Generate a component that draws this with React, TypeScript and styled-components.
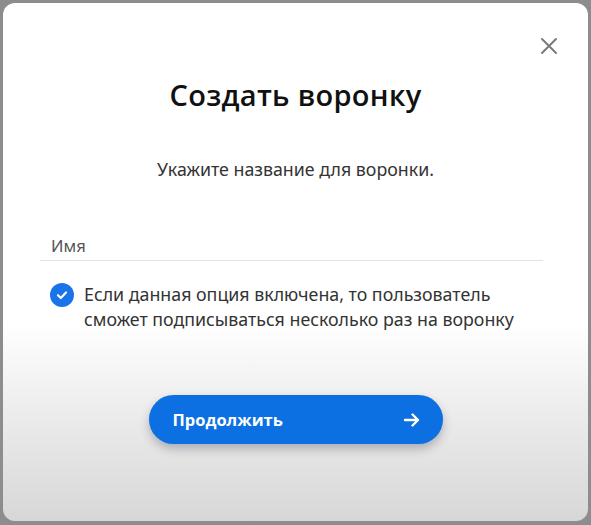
import React, { FC } from 'react';
import styled, { createGlobalStyle } from 'styled-components';

const GlobalStyle = createGlobalStyle`
    html, body {
        margin: 0;
        padding: 0;
        background: #8d8d8d;
    }
    body {
        font-family: 'Noto Sans', 'Open Sans', sans-serif;
    }
`;

const Backdrop = styled.div`
    width: 591px;
    height: 525px;
    padding: 3px 3px 4px 3px;
    box-sizing: border-box;
    background: #8d8d8d;
`;

const Modal = styled.div`
    position: relative;
    height: 100%;
    border-radius: 12px;
    background: linear-gradient(180deg, #ffffff 0%, #ffffff 62%, #ebebeb 80%, #d7d7d7 100%);
    display: flex;
    flex-direction: column;
    align-items: center;
    padding: 72px 37px 0 37px;
    box-sizing: border-box;
`;

const CloseButton = styled.button`
    position: absolute;
    top: 32px;
    right: 28px;
    width: 22px;
    height: 22px;
    padding: 0;
    border: none;
    background: none;
    display: flex;
    align-items: center;
    justify-content: center;
    color: #7a7a7a;
`;

const Title = styled.h1`
    margin: 0;
    font-family: 'Open Sans', 'Noto Sans', sans-serif;
    font-weight: 600;
    font-size: 29px;
    line-height: 40px;
    color: #111;
    letter-spacing: 0.3px;
`;

const Subtitle = styled.p`
    margin: 42px 0 0;
    font-size: 17.8px;
    line-height: 24px;
    color: #333;
`;

const Field = styled.div`
    align-self: stretch;
    margin: 54px 8px 0 0;
    padding: 0 0 3px 11px;
    border-bottom: 1.5px solid #e2e2e2;
    font-size: 16.5px;
    line-height: 22px;
    color: #555;
`;

const OptionRow = styled.label`
    align-self: stretch;
    margin-top: 21px;
    display: flex;
    align-items: flex-start;
    gap: 10px;
    padding-left: 10px;
`;

const Check = styled.span`
    flex: none;
    width: 24px;
    height: 24px;
    margin-top: 1px;
    border-radius: 50%;
    background: #1a73e8;
    display: flex;
    align-items: center;
    justify-content: center;
`;

const OptionText = styled.span`
    font-size: 17.8px;
    line-height: 25px;
    color: #333;
`;

const ContinueButton = styled.button`
    margin-top: 63px;
    width: 294px;
    height: 49px;
    border: none;
    border-radius: 25px;
    background: #0c70e3;
    box-shadow: 0 5px 10px rgba(40, 50, 70, 0.3);
    display: flex;
    align-items: center;
    justify-content: space-between;
    padding: 0 22px 0 24px;
    box-sizing: border-box;
    color: #fff;
    font-family: 'Open Sans', 'Noto Sans', sans-serif;
    font-weight: 700;
    font-size: 16.5px;
`;

const App: FC = () => (
    <>
        <GlobalStyle />
        <Backdrop>
            <Modal>
                <CloseButton aria-label="Закрыть">
                    <svg width="18" height="18" viewBox="0 0 18 18">
                        <path d="M2 2L16 16M16 2L2 16" stroke="currentColor" strokeWidth="2" strokeLinecap="round" />
                    </svg>
                </CloseButton>
                <Title>Создать воронку</Title>
                <Subtitle>Укажите название для воронки.</Subtitle>
                <Field>Имя</Field>
                <OptionRow>
                    <Check>
                        <svg width="14" height="14" viewBox="0 0 14 14">
                            <path d="M3 7.2L5.8 10L11 4.5" fill="none" stroke="#fff" strokeWidth="2.2" strokeLinecap="round" strokeLinejoin="round" />
                        </svg>
                    </Check>
                    <OptionText>
                        Если данная опция включена, то пользователь
                        <br />
                        сможет подписываться несколько раз на воронку
                    </OptionText>
                </OptionRow>
                <ContinueButton>
                    <span>Продолжить</span>
                    <svg width="18" height="16" viewBox="0 0 18 16">
                        <path d="M2 8H15M9.5 2.5L15 8L9.5 13.5" fill="none" stroke="#fff" strokeWidth="2.4" strokeLinecap="round" strokeLinejoin="round" />
                    </svg>
                </ContinueButton>
            </Modal>
        </Backdrop>
    </>
);

export default App;
